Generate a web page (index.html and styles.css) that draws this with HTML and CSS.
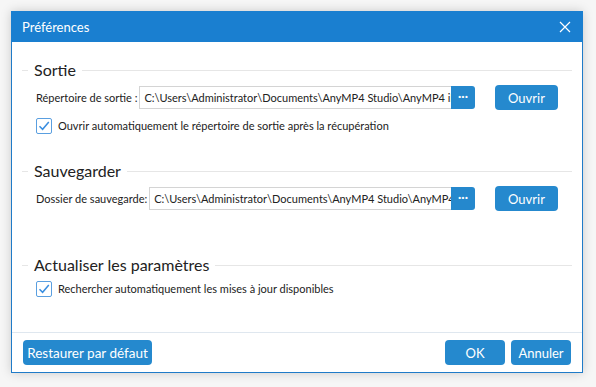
FILE: index.html
```html
<!DOCTYPE html>
<html lang="fr">
<head>
    <meta charset="UTF-8">
    <title>Préférences</title>
    <link rel="stylesheet" href="styles.css">
</head>
<body>
    <div class="dialog">
        <div class="title-bar">
            <span class="title">Préférences</span>
            <svg class="close-icon" width="12" height="12" viewBox="0 0 12 12">
                <path d="M1 1 L11 11 M11 1 L1 11" stroke="#fff" stroke-width="1.2" fill="none"/>
            </svg>
        </div>

        <div class="content">
            <!-- Sortie -->
            <div class="group-heading first">
                <span class="line-start"></span>
                <span class="heading-text">Sortie</span>
                <span class="line-end"></span>
            </div>
            <div class="path-row">
                <label class="path-label">Répertoire de sortie :</label>
                <div class="path-input">
                    <span class="path-text">C:\Users\Administrator\Documents\AnyMP4 Studio\AnyMP4 iPh</span>
                </div>
                <span class="browse-btn">···</span>
                <button class="btn open-btn">Ouvrir</button>
            </div>
            <div class="check-row">
                <span class="check-box">
                    <svg width="14" height="14" viewBox="0 0 14 14"><path d="M2.5 7.2 L5.6 10.3 L11.8 3" stroke="#3a8ee0" stroke-width="1.5" fill="none"/></svg>
                </span>
                <span class="check-label">Ouvrir automatiquement le répertoire de sortie après la récupération</span>
            </div>

            <!-- Sauvegarder -->
            <div class="group-heading second">
                <span class="line-start"></span>
                <span class="heading-text">Sauvegarder</span>
                <span class="line-end"></span>
            </div>
            <div class="path-row">
                <label class="path-label">Dossier de sauvegarde:</label>
                <div class="path-input">
                    <span class="path-text">C:\Users\Administrator\Documents\AnyMP4 Studio\AnyMP4 iP</span>
                </div>
                <span class="browse-btn">···</span>
                <button class="btn open-btn">Ouvrir</button>
            </div>

            <!-- Actualiser -->
            <div class="group-heading third">
                <span class="line-start"></span>
                <span class="heading-text">Actualiser les paramètres</span>
                <span class="line-end"></span>
            </div>
            <div class="check-row update-row">
                <span class="check-box">
                    <svg width="14" height="14" viewBox="0 0 14 14"><path d="M2.5 7.2 L5.6 10.3 L11.8 3" stroke="#3a8ee0" stroke-width="1.5" fill="none"/></svg>
                </span>
                <span class="check-label">Rechercher automatiquement les mises à jour disponibles</span>
            </div>
        </div>

        <div class="footer">
            <button class="btn restore-btn">Restaurer par défaut</button>
            <div class="footer-right">
                <button class="btn footer-btn">OK</button>
                <button class="btn footer-btn">Annuler</button>
            </div>
        </div>
    </div>
</body>
</html>
```

FILE: styles.css
```css
body {
    margin: 0;
    padding: 11px;
    background: #f6f6f6;
    font-family: Lato, "Noto Sans", sans-serif;
    color: #222;
}

.dialog {
    width: 570px;
    height: 361px;
    background: #fff;
    border: 1px solid #1f7bc8;
    border-top: none;
    box-shadow: 0 0 10px rgba(0, 0, 0, 0.18);
    display: flex;
    flex-direction: column;
}

.title-bar {
    height: 31px;
    margin: 0 -1px;
    background: #1a7fd0;
    display: flex;
    align-items: center;
    justify-content: space-between;
    padding: 0 12px 0 11px;
}

.title {
    color: #fff;
    font-size: 13px;
}

.close-icon {
    display: block;
}

.content {
    flex: 1;
    padding: 0 10px;
}

.group-heading {
    height: 20px;
    display: flex;
    align-items: center;
    gap: 6px;
}

.group-heading.first {
    margin-top: 18px;
}

.group-heading.second {
    margin-top: 27px;
}

.group-heading.third {
    margin-top: 44px;
}

.line-start {
    width: 6px;
    height: 1px;
    background: #e6e6e6;
}

.line-end {
    flex: 1;
    height: 1px;
    background: #e6e6e6;
}

.heading-text {
    font-size: 16px;
    color: #222;
    line-height: 20px;
}

.path-row {
    display: flex;
    align-items: center;
    padding: 0 14px;
    margin-top: 5px;
    height: 25px;
}

.path-label {
    font-size: 11px;
    white-space: nowrap;
    margin-right: 2px;
}

.path-input {
    flex: 1;
    min-width: 0;
    height: 23px;
    border: 1px solid #d4d4d4;
    border-right: none;
    box-sizing: border-box;
    overflow: hidden;
}

.path-text {
    display: block;
    overflow: hidden;
    white-space: nowrap;
    font-size: 11px;
    line-height: 21px;
    padding-left: 4px;
}

.browse-btn {
    width: 24px;
    height: 23px;
    flex: none;
    background: #2588cd;
    color: #fff;
    border-radius: 0 3px 3px 0;
    text-align: center;
    font-size: 12px;
    line-height: 19px;
    font-weight: bold;
}

.btn {
    border: none;
    background: #2589ce;
    color: #fff;
    font-family: inherit;
    font-size: 13px;
    border-radius: 4px;
    height: 25px;
    padding: 0;
    white-space: nowrap;
}

.open-btn {
    width: 63px;
    flex: none;
    margin-left: 20px;
}

.check-row {
    display: flex;
    align-items: center;
    padding: 0 14px;
    margin-top: 7px;
    height: 17px;
}

.update-row {
    margin-top: 5px;
}

.check-box {
    width: 14px;
    height: 14px;
    border: 1px solid #5a9fe0;
    border-radius: 2px;
    display: flex;
    align-items: center;
    justify-content: center;
    margin-right: 6px;
}

.check-label {
    font-size: 11px;
}

.footer {
    height: 39px;
    border-top: 1px solid #dfe7ef;
    display: flex;
    align-items: center;
    justify-content: space-between;
    padding: 0 11px;
}

.restore-btn {
    width: 129px;
    font-size: 13.5px;
}

.footer-right {
    display: flex;
    gap: 6px;
}

.footer-btn {
    width: 60px;
}
```
